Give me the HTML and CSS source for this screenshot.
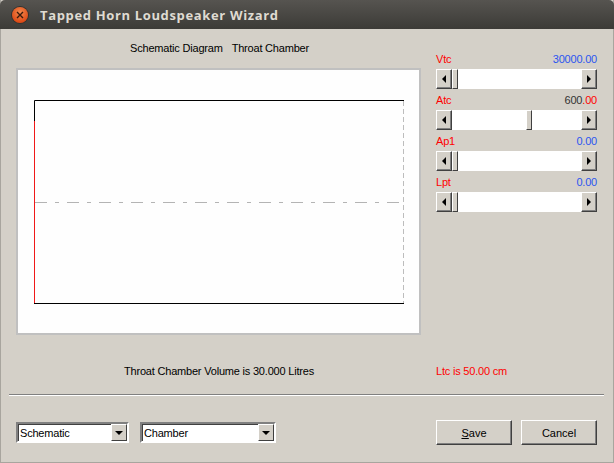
FILE: index.html
```html
<!DOCTYPE html>
<html lang="en">

<head>
  <meta charset="UTF-8">
  <meta name="viewport" content="width=device-width, initial-scale=1.0">
  <title>Tapped Horn Loudspeaker Wizard</title>
  <link rel="stylesheet" href="styles.css">
</head>

<body>
  <div class="window">
    <div class="titlebar">
      <div class="close">
        <svg width="8" height="8" viewBox="0 0 8 8"><path d="M1 1L7 7M7 1L1 7" stroke="#3a1a0c" stroke-width="1.4" fill="none"/></svg>
      </div>
      <div class="title">Tapped Horn Loudspeaker Wizard</div>
    </div>

    <div class="content">
      <div class="top">
        <div class="left">
          <div class="heading"><span>Schematic Diagram</span><span>Throat Chamber</span></div>
          <div class="panel">
            <svg class="diagram" width="370" height="204" viewBox="0 0 370 204">
              <path d="M.5 204V.5H370" stroke="#000" fill="none"/>
              <path d="M0 203.500H370" stroke="#000" fill="none"/>
              <path d="M.5 21V203" stroke="#f01818" fill="none"/>
              <path d="M369.500 1V203" stroke="#bdbdbd" stroke-dasharray="5 3" fill="none"/>
              <path d="M1 102.500H369" stroke="#b4b4b4" stroke-dasharray="12 8 4 8" fill="none"/>
            </svg>
          </div>
        </div>

        <div class="sliders">
          <div class="slider">
            <div class="slider-head"><span class="name">Vtc</span><span class="value blue">30000.00</span></div>
            <div class="scrollbar">
              <div class="arrow"><i class="tri-left"></i></div>
              <div class="track"><div class="thumb"></div></div>
              <div class="arrow"><i class="tri-right"></i></div>
            </div>
          </div>
          <div class="slider">
            <div class="slider-head"><span class="name">Atc</span><span class="value"><span class="dark">600</span><span class="red">.00</span></span></div>
            <div class="scrollbar">
              <div class="arrow"><i class="tri-left"></i></div>
              <div class="track track-mid"><div class="thumb"></div></div>
              <div class="arrow"><i class="tri-right"></i></div>
            </div>
          </div>
          <div class="slider">
            <div class="slider-head"><span class="name">Ap1</span><span class="value blue">0.00</span></div>
            <div class="scrollbar">
              <div class="arrow"><i class="tri-left"></i></div>
              <div class="track"><div class="thumb"></div></div>
              <div class="arrow"><i class="tri-right"></i></div>
            </div>
          </div>
          <div class="slider">
            <div class="slider-head"><span class="name">Lpt</span><span class="value blue">0.00</span></div>
            <div class="scrollbar">
              <div class="arrow"><i class="tri-left"></i></div>
              <div class="track"><div class="thumb"></div></div>
              <div class="arrow"><i class="tri-right"></i></div>
            </div>
          </div>
        </div>
      </div>

      <div class="status">
        <div class="status-left">Throat Chamber Volume is 30.000 Litres</div>
        <div class="status-right">Ltc is 50.00 cm</div>
      </div>

      <div class="separator"></div>

      <div class="bottom">
        <div class="combo combo-a">
          <span class="combo-text">Schematic</span>
          <div class="combo-btn"><i class="tri-down"></i></div>
        </div>
        <div class="combo combo-b">
          <span class="combo-text">Chamber</span>
          <div class="combo-btn"><i class="tri-down"></i></div>
        </div>
        <div class="buttons">
          <div class="btn btn-save"><span><u>S</u>ave</span></div>
          <div class="btn btn-cancel"><span>Cancel</span></div>
        </div>
      </div>
    </div>
  </div>
</body>

</html>
```

FILE: styles.css
```css
* {
  margin: 0;
  padding: 0;
  box-sizing: border-box;
}

html,
body {
  width: 614px;
  height: 463px;
  overflow: hidden;
}

body {
  font-family: "Liberation Sans", Arial, sans-serif;
  font-size: 11px;
  letter-spacing: -0.2px;
  color: #000;
  background-color: #d4d0c8;
}

.window {
  height: 463px;
  display: flex;
  flex-direction: column;
  background-color: #d4d0c8;
  border-left: 1px solid #a8a59e;
  border-right: 1px solid #a8a59e;
  border-bottom: 1px solid #a8a59e;
}

/* title bar */
.titlebar {
  height: 29px;
  margin: 0 -1px;
  padding-left: 12px;
  display: flex;
  align-items: center;
  gap: 12px;
  background: linear-gradient(#565450, #3c3b37);
  border-radius: 5px 5px 0 0;
}

.close {
  width: 16px;
  height: 16px;
  border-radius: 50%;
  display: flex;
  align-items: center;
  justify-content: center;
  background: radial-gradient(circle at 50% 35%, #f28a4e, #dd4814 75%);
  box-shadow: 0 0 0 1px #33322e;
}

.title {
  font-family: "Open Sans", sans-serif;
  font-weight: 700;
  font-size: 13px;
  letter-spacing: 0.65px;
  color: #dfdbd2;
}

/* main area */
.content {
  flex: 1;
  display: flex;
  flex-direction: column;
  padding: 0 15px;
}

.top {
  display: flex;
  gap: 15px;
}

.left {
  width: 405px;
}

.heading {
  height: 39px;
  padding-top: 13px;
  padding-left: 2px;
  line-height: 13px;
  display: flex;
  justify-content: center;
  gap: 9px;
}

.panel {
  width: 405px;
  height: 267px;
  padding: 30px 0 0 16px;
  background-color: #fefefe;
  border: 2px solid #c0c0c0;
}

.diagram {
  display: block;
}

/* scrollbars on the right */
.sliders {
  width: 161px;
  padding-top: 23px;
  display: flex;
  flex-direction: column;
}

.slider {
  height: 41px;
  display: flex;
  flex-direction: column;
}

.slider-head {
  height: 17px;
  padding-top: 1px;
  line-height: 13px;
  display: flex;
  justify-content: space-between;
}

.name,
.red {
  color: #f00;
}

.blue {
  color: #2a55f0;
}

.dark {
  color: #333;
}

.scrollbar {
  height: 20px;
  display: flex;
  background-color: #fff;
}

.arrow {
  width: 16px;
  height: 20px;
  display: flex;
  align-items: center;
  justify-content: center;
  background-color: #d4d0c8;
  border: 1px solid;
  border-color: #fff #404040 #404040 #fff;
  box-shadow: inset -1px -1px 0 #808080;
}

.track {
  flex: 1;
  display: flex;
}

.track-mid {
  padding-left: 74px;
}

.thumb {
  width: 6px;
  height: 20px;
  background-color: #d4d0c8;
  border: 1px solid;
  border-color: #fff #404040 #404040 #fff;
}

.tri-left,
.tri-right,
.tri-down {
  display: block;
  width: 0;
  height: 0;
}

.tri-left {
  border-top: 4px solid transparent;
  border-bottom: 4px solid transparent;
  border-right: 4px solid #000;
}

.tri-right {
  border-top: 4px solid transparent;
  border-bottom: 4px solid transparent;
  border-left: 4px solid #000;
}

.tri-down {
  border-left: 4px solid transparent;
  border-right: 4px solid transparent;
  border-top: 4px solid #000;
}

/* status line */
.status {
  height: 59px;
  padding-top: 30px;
  line-height: 13px;
  display: flex;
}

.status-left {
  width: 420px;
  text-align: center;
  padding-right: 14px;
}

.status-right {
  color: #f00;
}

.separator {
  height: 2px;
  margin-left: -7px;
  width: 595px;
  background-color: #fff;
  border-top: 1px solid #808080;
}

/* combos and buttons */
.bottom {
  display: flex;
  padding-top: 24px;
}

.combo {
  height: 21px;
  margin-top: 2px;
  padding-left: 2px;
  display: flex;
  align-items: center;
  justify-content: space-between;
  background-color: #fff;
  border: 2px solid;
  border-color: #808080 #fff #fff #808080;
  box-shadow: inset 1px 1px 0 #404040;
}

.combo-a {
  width: 113px;
}

.combo-b {
  width: 136px;
  margin-left: 11px;
}

.combo-btn {
  width: 16px;
  height: 17px;
  display: flex;
  align-items: center;
  justify-content: center;
  background-color: #d4d0c8;
  border: 1px solid;
  border-color: #fff #404040 #404040 #fff;
}

.buttons {
  margin-left: auto;
  margin-right: 1px;
  display: flex;
  gap: 9px;
}

.btn {
  width: 76px;
  height: 25px;
  display: flex;
  align-items: center;
  justify-content: center;
  background-color: #d4d0c8;
  border: 1px solid;
  border-color: #fff #404040 #404040 #fff;
  box-shadow: inset -1px -1px 0 #808080;
  letter-spacing: 0;
}
```
